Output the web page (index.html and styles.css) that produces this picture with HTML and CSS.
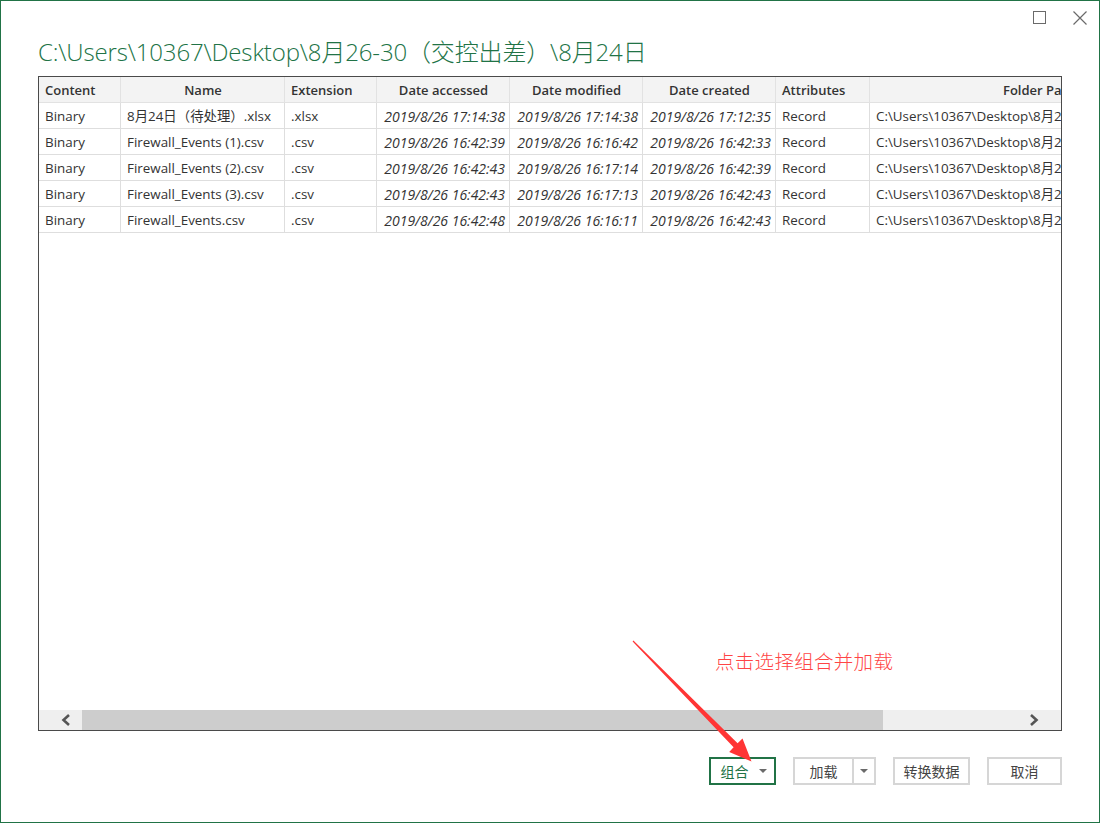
FILE: index.html
```html
<!DOCTYPE html>
<html lang="zh-CN">
<head>
<meta charset="utf-8">
<title>导航器</title>
<link rel="stylesheet" href="styles.css">
</head>
<body>
<div class="window">
  <div class="titlebar">
    <span class="ctl ctl-max" aria-label="最大化">
      <svg width="13" height="13" viewBox="0 0 13 13"><rect x="0.5" y="0.5" width="12" height="12" fill="none" stroke="#6a6a6a" stroke-width="1"/></svg>
    </span>
    <span class="ctl ctl-close" aria-label="关闭">
      <svg width="14" height="14" viewBox="0 0 14 14"><path d="M0.5 0.5 L13.5 13.5 M13.5 0.5 L0.5 13.5" stroke="#6a6a6a" stroke-width="1.2" fill="none"/></svg>
    </span>
  </div>
  <h1 class="path-title">C:\Users\10367\Desktop\8月26-30（交控出差）\8月24日</h1>

  <div class="frame">
    <div class="grid-wrap">
      <div class="grid">
        <div class="row head">
          <div class="cell left">Content</div>
          <div class="cell center">Name</div>
          <div class="cell left">Extension</div>
          <div class="cell center">Date accessed</div>
          <div class="cell center">Date modified</div>
          <div class="cell center">Date created</div>
          <div class="cell left">Attributes</div>
          <div class="cell center">Folder Path</div>
        </div>
        <div class="row">
          <div class="cell">Binary</div>
          <div class="cell">8月24日（待处理）.xlsx</div>
          <div class="cell">.xlsx</div>
          <div class="cell date">2019/8/26 17:14:38</div>
          <div class="cell date">2019/8/26 17:14:38</div>
          <div class="cell date">2019/8/26 17:12:35</div>
          <div class="cell">Record</div>
          <div class="cell">C:\Users\10367\Desktop\8月26-30（交控出差）\8月24日\</div>
        </div>
        <div class="row">
          <div class="cell">Binary</div>
          <div class="cell">Firewall_Events (1).csv</div>
          <div class="cell">.csv</div>
          <div class="cell date">2019/8/26 16:42:39</div>
          <div class="cell date">2019/8/26 16:16:42</div>
          <div class="cell date">2019/8/26 16:42:33</div>
          <div class="cell">Record</div>
          <div class="cell">C:\Users\10367\Desktop\8月26-30（交控出差）\8月24日\</div>
        </div>
        <div class="row">
          <div class="cell">Binary</div>
          <div class="cell">Firewall_Events (2).csv</div>
          <div class="cell">.csv</div>
          <div class="cell date">2019/8/26 16:42:43</div>
          <div class="cell date">2019/8/26 16:17:14</div>
          <div class="cell date">2019/8/26 16:42:39</div>
          <div class="cell">Record</div>
          <div class="cell">C:\Users\10367\Desktop\8月26-30（交控出差）\8月24日\</div>
        </div>
        <div class="row">
          <div class="cell">Binary</div>
          <div class="cell">Firewall_Events (3).csv</div>
          <div class="cell">.csv</div>
          <div class="cell date">2019/8/26 16:42:43</div>
          <div class="cell date">2019/8/26 16:17:13</div>
          <div class="cell date">2019/8/26 16:42:43</div>
          <div class="cell">Record</div>
          <div class="cell">C:\Users\10367\Desktop\8月26-30（交控出差）\8月24日\</div>
        </div>
        <div class="row">
          <div class="cell">Binary</div>
          <div class="cell">Firewall_Events.csv</div>
          <div class="cell">.csv</div>
          <div class="cell date">2019/8/26 16:42:48</div>
          <div class="cell date">2019/8/26 16:16:11</div>
          <div class="cell date">2019/8/26 16:42:43</div>
          <div class="cell">Record</div>
          <div class="cell">C:\Users\10367\Desktop\8月26-30（交控出差）\8月24日\</div>
        </div>
      </div>
    </div>
    <div class="hscroll">
      <div class="sb-btn sb-left">
        <svg width="10" height="12" viewBox="0 0 10 12"><path d="M8 1 L2.5 6 L8 11" fill="none" stroke="#555" stroke-width="2.6"/></svg>
      </div>
      <div class="sb-thumb"></div>
      <div class="sb-track"></div>
      <div class="sb-btn sb-right">
        <svg width="10" height="12" viewBox="0 0 10 12"><path d="M2 1 L7.5 6 L2 11" fill="none" stroke="#555" stroke-width="2.6"/></svg>
      </div>
    </div>
  </div>

  <div class="actions">
    <button class="btn btn-primary"><span>组合</span><span class="caret"></span></button>
    <div class="btn split">
      <span class="split-main">加载</span>
      <span class="split-drop"><span class="caret"></span></span>
    </div>
    <button class="btn btn-plain btn-wide">转换数据</button>
    <button class="btn btn-plain btn-cancel">取消</button>
  </div>

  <div class="note">点击选择组合并加载</div>
  <svg class="arrow" width="1100" height="823" viewBox="0 0 1100 823">
    <polygon points="633.4,640.6 737.6,743.3 742.5,738.6 751.5,761.5 729.2,752.0 733.6,747.3 632.6,641.4" fill="#ff3535"/>
  </svg>
</div>
</body>
</html>
```

FILE: styles.css
```css
* { box-sizing: border-box; }

html, body {
  margin: 0;
  padding: 0;
  background: #ffffff;
}

body {
  font-family: "Open Sans", "Noto Sans", "Noto Sans CJK SC", sans-serif;
  color: #333;
}

.window {
  position: relative;
  width: 1100px;
  height: 823px;
  border: 1px solid #217346;
  background: #fff;
  padding: 0 37px;
  display: flex;
  flex-direction: column;
  overflow: hidden;
}

.titlebar {
  height: 30px;
  margin-right: -37px;
  padding: 10px 12px 0 0;
  display: flex;
  justify-content: flex-end;
  align-items: flex-start;
  gap: 26px;
}

.ctl {
  display: flex;
  width: 14px;
  height: 14px;
}

.path-title {
  margin: 0;
  height: 45px;
  padding-top: 4px;
  font-family: "Open Sans", "Noto Sans CJK SC", sans-serif;
  font-weight: 300;
  font-size: 24px;
  line-height: 34px;
  color: #217346;
  white-space: nowrap;
  letter-spacing: -0.15px;
}

.frame {
  height: 655px;
  border: 1px solid #4a4a4a;
  display: flex;
  flex-direction: column;
}

.grid-wrap {
  flex: 1;
  overflow: hidden;
}

.grid {
  width: 1200px;
}

.row {
  display: grid;
  grid-template-columns: 82px 164px 92px 133px 133px 133px 94px 338px;
  height: 26px;
}

.cell {
  height: 26px;
  border-right: 1px solid #dedede;
  border-bottom: 1px solid #dedede;
  padding: 1px 5px 0 6px;
  font-size: 13.4px;
  line-height: 25px;
  white-space: nowrap;
  overflow: hidden;
  color: #333;
}

.row.head .cell {
  background: #f3f3f3;
  font-weight: 600;
  font-size: 13px;
  color: #333;
  border-right-color: #e2e2e2;
  border-bottom-color: #e2e2e2;
}

.cell.center { text-align: center; }
.cell.left { text-align: left; }

.cell.date {
  font-style: italic;
  text-align: right;
  padding-right: 4px;
  padding-left: 1px;
  font-size: 14px;
}

.hscroll {
  height: 20px;
  display: flex;
  background: #efefef;
}

.sb-btn {
  width: 43px;
  display: flex;
  align-items: center;
}

.sb-left { padding-left: 22px; }
.sb-right { padding-left: 11px; }

.sb-thumb {
  width: 801px;
  background: #cdcdcd;
}

.sb-track { flex: 1; }

.actions {
  margin-top: 26px;
  display: flex;
  justify-content: flex-end;
  gap: 17px;
}

.btn {
  height: 28px;
  border: 2px solid #d6d6d6;
  background: #fff;
  font-family: "Noto Sans CJK SC", sans-serif;
  font-size: 14px;
  color: #444;
  padding: 0;
  display: flex;
  align-items: center;
  justify-content: center;
}

.btn-primary {
  width: 67px;
  border-color: #217346;
  color: #217346;
  gap: 10px;
  padding-left: 2px;
}

.caret {
  display: inline-block;
  width: 0;
  height: 0;
  border-left: 4px solid transparent;
  border-right: 4px solid transparent;
  border-top: 4px solid #6a6a6a;
}

.split {
  width: 83px;
  justify-content: flex-start;
}

.split-main {
  width: 59px;
  height: 100%;
  display: flex;
  align-items: center;
  justify-content: center;
  border-right: 2px solid #d6d6d6;
}

.split-drop {
  flex: 1;
  display: flex;
  align-items: center;
  justify-content: center;
}

.btn-wide { width: 77px; }
.btn-cancel { width: 75px; }

.note {
  position: absolute;
  left: 714px;
  top: 647px;
  font-family: "Noto Sans CJK SC", sans-serif;
  font-weight: 300;
  font-size: 19.5px;
  line-height: 26px;
  color: #ff4545;
  letter-spacing: 0.3px;
}

.arrow {
  position: absolute;
  left: -1px;
  top: -1px;
  pointer-events: none;
}
```
